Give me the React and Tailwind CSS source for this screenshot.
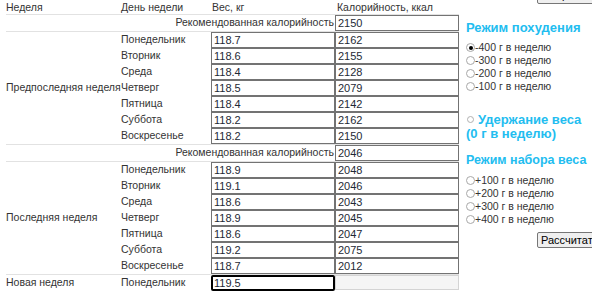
import React from "react";

const dayNames = [
  "Понедельник",
  "Вторник",
  "Среда",
  "Четверг",
  "Пятница",
  "Суббота",
  "Воскресенье",
];

const weeks = [
  {
    label: "Предпоследняя неделя",
    rec: "2150",
    days: [
      ["118.7", "2162"],
      ["118.6", "2155"],
      ["118.4", "2128"],
      ["118.5", "2079"],
      ["118.4", "2142"],
      ["118.2", "2162"],
      ["118.2", "2150"],
    ],
  },
  {
    label: "Последняя неделя",
    rec: "2046",
    days: [
      ["118.9", "2048"],
      ["119.1", "2046"],
      ["118.6", "2043"],
      ["118.9", "2045"],
      ["118.6", "2047"],
      ["119.2", "2075"],
      ["118.7", "2012"],
    ],
  },
];

const loss = ["-400 г в неделю", "-300 г в неделю", "-200 г в неделю", "-100 г в неделю"];
const gain = ["+100 г в неделю", "+200 г в неделю", "+300 г в неделю", "+400 г в неделю"];

function Field({ value }) {
  return (
    <input
      readOnly
      value={value}
      className="h-[16px] w-[124px] border border-[#737373] px-[2px] text-[11px] leading-[14px] text-[#1e2a36] outline-none"
    />
  );
}

function Radio({ checked, label }) {
  return (
    <div className="flex h-[13px] items-center leading-[13px]">
      <span className="flex h-[9px] w-[9px] items-center justify-center rounded-full border border-[#a8a8a8] bg-white">
        {checked && <span className="h-[4px] w-[4px] rounded-full bg-black" />}
      </span>
      <span className="text-[10.5px] text-[#333]">{label}</span>
    </div>
  );
}

export default function App() {
  return (
    <div className="flex h-[297px] w-[592px] overflow-hidden bg-white pl-[6px] font-['Liberation_Sans',Arial,sans-serif] text-[10.5px] text-[#333]">
      {/* table */}
      <div className="w-[453px] shrink-0">
        <div className="flex h-[14px] leading-[14px]">
          <div className="w-[115px]">Неделя</div>
          <div className="w-[90px]">День недели</div>
          <div className="w-[124px] pl-[1px]">Вес, кг</div>
          <div className="w-[124px] pl-[2px]">Калорийность, ккал</div>
        </div>

        {weeks.map((week) => (
          <div key={week.label}>
            <div className="flex border-t border-[#e2e2e2]">
              <div className="flex h-[16px] w-[329px] items-center justify-end whitespace-nowrap pr-[1px]">
                Рекомендованная калорийность
              </div>
              <Field value={week.rec} />
            </div>
            <div className="flex border-t border-[#e2e2e2]">
              <div className="flex w-[115px] items-center whitespace-nowrap">
                {week.label}
              </div>
              <div>
                {week.days.map(([w, c], i) => (
                  <div key={i} className="flex">
                    <div className="flex h-[16px] w-[90px] items-center">
                      {dayNames[i]}
                    </div>
                    <Field value={w} />
                    <Field value={c} />
                  </div>
                ))}
              </div>
            </div>
          </div>
        ))}

        <div className="flex border-t border-[#e2e2e2]">
          <div className="flex h-[16px] w-[115px] items-center">Новая неделя</div>
          <div className="flex h-[16px] w-[90px] items-center">Понедельник</div>
          <input
            readOnly
            value="119.5"
            className="h-[16px] w-[124px] rounded-[2px] border-2 border-black px-[1px] text-[11px] leading-[12px] text-[#1e2a36] outline-none"
          />
          <input
            readOnly
            disabled
            value=""
            className="h-[15px] w-[124px] border border-[#d4d4d4] bg-[#f5f5f5]"
          />
        </div>
      </div>

      {/* modes */}
      <div className="ml-[7px] w-[140px] shrink-0">
        <button className="-mt-[13px] ml-[71px] block h-[17px] whitespace-nowrap rounded-[2px] border border-[#767676] bg-[#efefef] px-[5px] text-[11px] leading-[15px] text-black">
          Стереть все
        </button>

        <div className="mt-[16px] whitespace-nowrap text-[13px] font-bold leading-[15px] text-[#22bdf0]">
          Режим похудения
        </div>
        <div className="mt-[6px]">
          {loss.map((l, i) => (
            <Radio key={l} label={l} checked={i === 0} />
          ))}
        </div>

        <div className="mt-[20px] whitespace-nowrap text-[13px] font-bold leading-[14px] text-[#22bdf0]">
          <span className="mr-[4px] ml-[1px] inline-block h-[7px] w-[7px] rounded-full border border-[#b0b0b0] bg-white align-[1px]" />
          Удержание веса
          <br />
          (0 г в неделю)
        </div>

        <div className="mt-[12px] whitespace-nowrap text-[12.5px] font-bold leading-[15px] text-[#22bdf0]">
          Режим набора веса
        </div>
        <div className="mt-[6px]">
          {gain.map((l) => (
            <Radio key={l} label={l} />
          ))}
        </div>

        <button className="mt-[6px] ml-[71px] block h-[16px] whitespace-nowrap rounded-[2px] border border-[#767676] bg-[#efefef] px-[3px] text-[11px] leading-[14px] text-black">
          Рассчитать
        </button>
      </div>
    </div>
  );
}
